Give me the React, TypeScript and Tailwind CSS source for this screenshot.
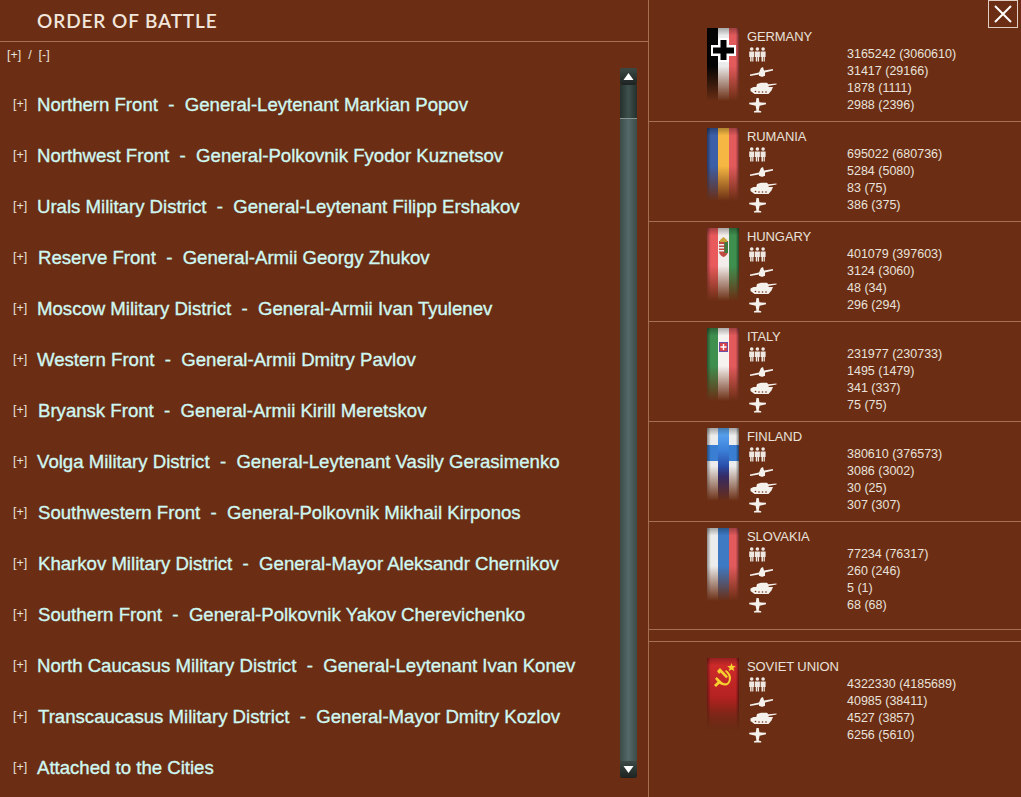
import React from "react";

const fronts: [string, number][] = [
  ["Northern Front  -  General-Leytenant Markian Popov", 0],
  ["Northwest Front  -  General-Polkovnik Fyodor Kuznetsov", 0],
  ["Urals Military District  -  General-Leytenant Filipp Ershakov", 0],
  ["Reserve Front  -  General-Armii Georgy Zhukov", 1],
  ["Moscow Military District  -  General-Armii Ivan Tyulenev", 0],
  ["Western Front  -  General-Armii Dmitry Pavlov", 0],
  ["Bryansk Front  -  General-Armii Kirill Meretskov", 1],
  ["Volga Military District  -  General-Leytenant Vasily Gerasimenko", 0],
  ["Southwestern Front  -  General-Polkovnik Mikhail Kirponos", 1],
  ["Kharkov Military District  -  General-Mayor Aleksandr Chernikov", 1],
  ["Southern Front  -  General-Polkovnik Yakov Cherevichenko", 1],
  ["North Caucasus Military District  -  General-Leytenant Ivan Konev", 0],
  ["Transcaucasus Military District  -  General-Mayor Dmitry Kozlov", 1],
  ["Attached to the Cities", 0],
];

const Men = () => (
  <svg width="28" height="15" viewBox="0 0 28 15" fill="#efe8e2" className="block">
    {[0.2, 5.9, 11.6].map((x) => (
      <g key={x}>
        <circle cx={x + 2.5} cy="2" r="1.8" />
        <path d={`M${x} 4.500h5v5.500h-.8v4.500h-1.200V10h-.6v4.500H${x + 0.9}V10H${x}z`} />
      </g>
    ))}
  </svg>
);
const Gun = () => (
  <svg width="28" height="14" viewBox="0 0 28 14" fill="#f4f0ec" className="block">
    <path d="M1 9.500L10 7.500L12 3L14 2L15 5.500L24 4V5.500L16 7.500V11H10V9.500L1 11z" />
    <circle cx="13" cy="9" r="2.800" />
  </svg>
);
const Tank = () => (
  <svg width="28" height="14" viewBox="0 0 28 14" fill="#f4f0ec" className="block">
    <path d="M8 2L12 .8h6l1.300 1.400 8.200-.6v1L19.500 4l.5 2H7z" />
    <path d="M1.500 6.500l3-1.500H24l-1.500 3.500-3 3.500H5.500l-4-3z" />
    <g fill="#6c2f14">
      <circle cx="6.500" cy="9.500" r=".8" />
      <circle cx="10" cy="10" r=".8" />
      <circle cx="13.500" cy="10" r=".8" />
      <circle cx="17" cy="10" r=".8" />
    </g>
  </svg>
);
const Plane = () => (
  <svg width="28" height="15" viewBox="0 0 28 15" fill="#f4f0ec" className="block">
    <path d="M7.500 0h2.200l.7 4.300 6.600.5v1.500l-6.400 1.500-.9 4.700 2.500.8v1.200H5v-1.200l2.500-.8-.9-4.700L.2 6.300V4.800l6.600-.5z" />
  </svg>
);

const Flag = ({ id, children }: { id: string; children: React.ReactNode }) => (
  <svg width="32" height="76" viewBox="0 0 32 76" className="block shrink-0">
    <defs>
      <linearGradient id={`fade${id}`} x1="0" y1="0" x2="0" y2="1">
        <stop offset="0" stopColor="#fff" />
        <stop offset=".5" stopColor="#fff" />
        <stop offset=".96" stopColor="#000" />
      </linearGradient>
      <linearGradient id={`side${id}`} x1="0" y1="0" x2="1" y2="0">
        <stop offset="0" stopColor="#000" stopOpacity=".4" />
        <stop offset=".12" stopColor="#000" stopOpacity="0" />
        <stop offset=".9" stopColor="#000" stopOpacity="0" />
        <stop offset="1" stopColor="#000" stopOpacity=".5" />
      </linearGradient>
      <linearGradient id={`top${id}`} x1="0" y1="0" x2="0" y2="1">
        <stop offset="0" stopColor="#000" stopOpacity=".3" />
        <stop offset=".1" stopColor="#000" stopOpacity="0" />
      </linearGradient>
      <mask id={`m${id}`}>
        <rect width="32" height="76" fill={`url(#fade${id})`} />
      </mask>
    </defs>
    <g mask={`url(#m${id})`}>
      {children}
      <rect width="32" height="76" fill={`url(#top${id})`} />
      <rect width="32" height="76" fill={`url(#side${id})`} />
    </g>
  </svg>
);

const Bars = ({ c }: { c: [string, string, string] }) => (
  <>
    <rect x="0" width="11" height="76" fill={c[0]} />
    <rect x="11" width="11" height="76" fill={c[1]} />
    <rect x="22" width="10" height="76" fill={c[2]} />
  </>
);

const flags: Record<string, React.ReactNode> = {
  germany: (
    <>
      <Bars c={["#050505", "#ececec", "#e25a5c"]} />
      <path d="M11 10h11v7h7v11h-7v6H11v-6H4V17h7z" fill="#fff" />
      <path d="M13.500 12h6v7.500h7.500v6h-7.500V32h-6v-6.500H6v-6h7.500z" fill="#000" />
    </>
  ),
  rumania: <Bars c={["#3c5fa8", "#f6b842", "#e25a5c"]} />,
  hungary: (
    <>
      <Bars c={["#e85a5c", "#f2ecea", "#3f8f4f"]} />
      <path d="M12 13h9v10c0 3-2 5-4.500 6-2.500-1-4.500-3-4.500-6z" fill="#c04a40" />
      <path d="M12 16h5v1.500h-5zM12 19h5v1.500h-5zM12 22h5v1.500h-5z" fill="#eee" />
      <path d="M13 12l3.500-3 3.500 3v2h-7z" fill="#c9a23a" />
      <rect x="17.500" y="14" width="3.500" height="11" fill="#3f7a3f" />
    </>
  ),
  italy: (
    <>
      <Bars c={["#3f8f4f", "#f6f2f0", "#e25a5c"]} />
      <rect x="12" y="14" width="9" height="10" fill="#6a4fa8" />
      <rect x="13" y="15" width="7" height="8" fill="#d8434a" />
      <path d="M15.800 16h1.400v2.300h2.300v1.400h-2.300V22h-1.400v-2.300h-2.300v-1.400h2.300z" fill="#fff" />
    </>
  ),
  finland: (
    <>
      <defs>
        <linearGradient id="finV" x1="0" y1="0" x2="0" y2="1">
          <stop offset="0" stopColor="#62aef6" />
          <stop offset=".3" stopColor="#3a7ed8" />
          <stop offset=".65" stopColor="#1e2a86" />
        </linearGradient>
      </defs>
      <rect width="32" height="76" fill="#ececec" />
      <rect y="17" width="32" height="16" fill="#3a7ed4" />
      <rect x="11" width="11" height="76" fill="url(#finV)" />
    </>
  ),
  slovakia: <Bars c={["#ececec", "#3e7ac4", "#e25a5c"]} />,
  soviet: (
    <>
      <defs>
        <linearGradient id="sovG" x1="0" y1="0" x2="0" y2="1">
          <stop offset="0" stopColor="#d42c2c" />
          <stop offset=".6" stopColor="#b02020" />
          <stop offset="1" stopColor="#6b1a14" />
        </linearGradient>
      </defs>
      <rect width="32" height="76" fill="url(#sovG)" />
      <path d="M24.500 5l1.200 2.900 3.100.2-2.400 2 .8 3-2.700-1.700-2.700 1.700.8-3-2.400-2 3.100-.2z" fill="#f7d030" />
      <path d="M10 13l3-3 8 8.500-1.800 1.700-5.700-5.700-1.500 1.500z" fill="#f7d030" />
      <path d="M19 12c5 3 6.500 8.500 3.500 13-2.500 3.500-6.500 3-10 .8L9 29l-2-2 3.500-3.300-2.500-3 1.800-1.700 5 5c3 2 5.200 1.500 6.300-.3 1.800-3 .5-7.500-3-10.500z" fill="#f7d030" />
    </>
  ),
};

const nations = [
  { key: "germany", name: "GERMANY", s: ["3165242 (3060610)", "31417 (29166)", "1878 (1111)", "2988 (2396)"], cls: "h-[122px] pt-[28px]" },
  { key: "rumania", name: "RUMANIA", s: ["695022 (680736)", "5284 (5080)", "83 (75)", "386 (375)"], cls: "h-[100px] pt-[6px]" },
  { key: "hungary", name: "HUNGARY", s: ["401079 (397603)", "3124 (3060)", "48 (34)", "296 (294)"], cls: "h-[100px] pt-[6px]" },
  { key: "italy", name: "ITALY", s: ["231977 (230733)", "1495 (1479)", "341 (337)", "75 (75)"], cls: "h-[100px] pt-[6px]" },
  { key: "finland", name: "FINLAND", s: ["380610 (376573)", "3086 (3002)", "30 (25)", "307 (307)"], cls: "h-[100px] pt-[6px]" },
  { key: "slovakia", name: "SLOVAKIA", s: ["77234 (76317)", "260 (246)", "5 (1)", "68 (68)"], cls: "h-[108px] pt-[6px]" },
];
const soviet = { key: "soviet", name: "SOVIET UNION", s: ["4322330 (4185689)", "40985 (38411)", "4527 (3857)", "6256 (5610)"] };

const icons = [<Men key="m" />, <Gun key="g" />, <Tank key="t" />, <Plane key="p" />];

const Nation = ({ n }: { n: { key: string; name: string; s: string[] } }) => (
  <div className="flex gap-[8px] pl-[58px]">
    <Flag id={n.key}>{flags[n.key]}</Flag>
    <div className="flex flex-col">
      <div className="h-[17px] text-[13px] leading-[17px] tracking-[-0.1px]">{n.name}</div>
      <div className="h-px" />
      {n.s.map((v, i) => (
        <div key={v} className="flex h-[17px] items-center text-[12.5px] leading-[17px]">
          <div className="w-[100px] pl-[2px]">{icons[i]}</div>
          <div>{v}</div>
        </div>
      ))}
    </div>
  </div>
);

const Arrow = ({ up }: { up?: boolean }) => (
  <div className="flex h-[17px] w-[17px] items-center justify-center rounded-[2px] bg-gradient-to-b from-[#3c4a46] to-[#1d2321]">
    <svg width="11" height="9" viewBox="0 0 11 9" fill="#fff">
      <path d={up ? "M5.500 1L10.500 8H.5z" : "M5.500 8L10.500 1H.5z"} />
    </svg>
  </div>
);

export default function App() {
  return (
    <div className="flex h-[797px] w-[1021px] overflow-hidden bg-[#6b2e14] font-['Liberation_Sans',sans-serif] text-[#e9e1da]">
      <div className="flex w-[649px] shrink-0 flex-col border-r border-[#a5704f]">
        <div className="flex h-[42px] shrink-0 items-center border-b border-[#a5704f] pl-[37px] pt-[2px] font-['Lato',sans-serif] text-[19px] font-semibold tracking-[0.9px] text-[#f2e6dc]">
          ORDER OF BATTLE
        </div>
        <div className="flex min-h-0 flex-1">
          <div className="flex w-[620px] shrink-0 flex-col">
            <div className="h-[37px] pl-[7px] pt-[5px] text-[12.5px] leading-[16px] whitespace-pre">[+]  /  [-]</div>
            {fronts.map(([t, off]) => (
              <div key={t} className="flex h-[51px] shrink-0 items-center pl-[13px]">
                <div className="w-[24px] text-[12.5px]">[+]</div>
                <div className={off ? "ml-px whitespace-pre text-[18.6px] text-[#cff7f1] [-webkit-text-stroke:0.35px_#cff7f1]" : "whitespace-pre text-[18.6px] text-[#cff7f1] [-webkit-text-stroke:0.35px_#cff7f1]"}>{t}</div>
              </div>
            ))}
          </div>
          <div className="flex h-[736px] w-[17px] shrink-0 flex-col pt-[26px]">
            <Arrow up />
            <div className="h-[33px] bg-gradient-to-r from-[#25302d] via-[#3f514c] to-[#25302d]" />
            <div className="flex-1 border-t border-[#86948f] bg-gradient-to-r from-[#3b4c47] via-[#55696a] to-[#3b4c47]" />
            <Arrow />
          </div>
        </div>
      </div>
      <div className="relative flex min-w-0 flex-1 flex-col">
        <button className="absolute right-[3px] top-0 flex h-[28px] w-[30px] items-center justify-center border border-[#e0cfc2]">
          <svg width="20" height="20" viewBox="0 0 20 20" stroke="#fff" strokeWidth="2" fill="none">
            <path d="M2 2l16 16M18 2L2 18" />
          </svg>
        </button>
        {nations.map((n) => (
          <div key={n.key} className={`${n.cls} shrink-0 border-b border-[#a5704f]`}>
            <Nation n={n} />
          </div>
        ))}
        <div className="h-[12px] shrink-0 border-b border-[#a5704f]" />
        <div className="pt-[16px]">
          <Nation n={soviet} />
        </div>
      </div>
    </div>
  );
}
